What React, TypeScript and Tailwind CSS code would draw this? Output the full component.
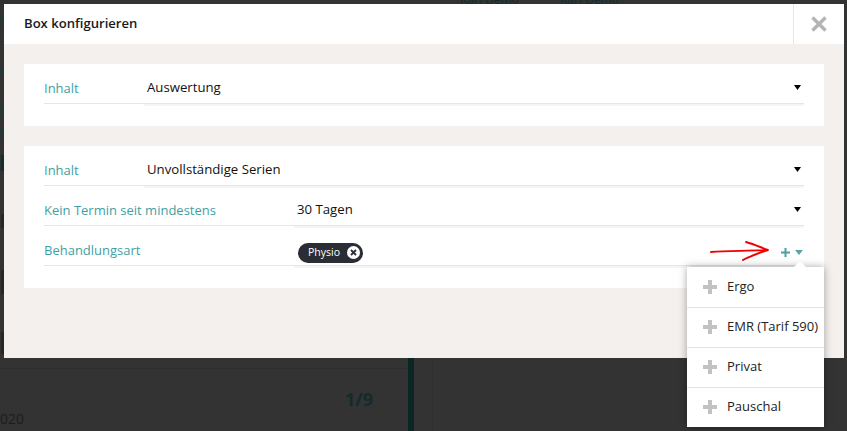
const font = { fontFamily: '"Open Sans", "Noto Sans", sans-serif' };

function Caret() {
  return (
    <svg width="7" height="5" viewBox="0 0 7 5" className="shrink-0">
      <path d="M0 0H7L3.5 5Z" fill="#000" />
    </svg>
  );
}

function Row({
  label,
  value,
  labelW,
  children,
}: {
  label: string;
  value?: string;
  labelW: string;
  children?: React.ReactNode;
}) {
  return (
    <div className="flex h-10 items-start">
      <div className={`${labelW} h-10 shrink-0 border-b border-[#e6e6e6] pt-[15px] text-[13px] leading-[18px] text-[#3f9fa3]`}>
        {label}
      </div>
      <div className="flex-1 border-b-2 border-[#f5f5f5]">
        <div className="flex h-10 items-center justify-between border-b border-[#e6e6e6] pt-2">
          {children ?? (
            <>
              <span className="pl-[3px] text-[13.2px] text-[#111]">{value}</span>
              <span className="flex pr-[3px]">
                <Caret />
              </span>
            </>
          )}
        </div>
      </div>
    </div>
  );
}

function MenuItem({ label }: { label: string }) {
  return (
    <div className="flex h-10 items-center border-b border-[#e3e3e3] pb-[2px] pl-4 text-[13px] text-[#222] last:h-[39px] last:border-b-0">
      <svg width="14" height="14" viewBox="0 0 14 14" className="mr-[10px] shrink-0">
        <path d="M5 0h4v5h5v4H9v5H5V9H0V5h5z" fill="#c2c2c2" />
      </svg>
      {label}
    </div>
  );
}

export default function App() {
  return (
    <div className="relative flex h-[431px] w-[847px] flex-col overflow-hidden bg-[#333333]" style={font}>
      {/* dimmed page behind the dialog */}
      <div className="flex h-1 shrink-0 items-end gap-[43px] overflow-hidden pl-[460px] text-[12px] leading-[14px] text-[#0f2e2f]">
        <span className="-mb-[3px] w-[57px] whitespace-nowrap">Kari Demo</span>
        <span className="-mb-[3px] w-[57px] whitespace-nowrap">Kari Demo</span>
      </div>
      <div className="flex h-[354px] w-1 shrink-0 flex-col pl-px">
        <div className="mt-3 h-[10px] bg-[#1c3c3c]" />
        <div className="mt-10 h-[10px] bg-[#1c3c3c]" />
        <div className="mt-[29px] h-[10px] bg-[#1c3c3c]" />
        <div className="mt-[13px] h-[10px] bg-[#1c3c3c]" />
        <div className="mt-[17px] h-4 bg-[#0f3030]" />
        <div className="mt-[43px] h-[14px] bg-[#272727]" />
        <div className="mt-[42px] h-6 bg-[#272727]" />
        <div className="mt-[38px] h-[22px] bg-[#272727]" />
      </div>
      <div className="flex flex-1">
        <div className="flex w-[408px] shrink-0 flex-col pt-[10px]">
          <div className="flex flex-1 justify-between overflow-hidden border-t border-[#2e2e2e] pr-[35px]">
            <span className="-ml-2 pt-[39px] text-[14px] text-[#1d1d1d]">2020</span>
            <span className="pt-[17px] text-[18px] font-bold text-[#142a2c]">1/9</span>
          </div>
        </div>
        <div className="w-[6px] bg-[#0a2625]" />
        <div className="w-[18px]" />
        <div className="flex-1 border-l border-[#303030]" />
      </div>

      {/* dialog */}
      <div className="absolute left-1 top-1 h-[354px] w-[840px] bg-[#f4f0ed]">
        <div className="flex h-10 bg-white">
          <div className="flex-1 pl-5 text-[13.1px] font-semibold leading-[39px] text-[#1a1a1a]">Box konfigurieren</div>
          <div className="flex w-[51px] items-center justify-center border-l border-[#e6e6e6] pr-px">
            <svg width="16" height="16" viewBox="0 0 16 16">
              <path d="M1.5 1.5L14.5 14.5M14.5 1.5L1.5 14.5" stroke="#b4b4b4" strokeWidth="3.4" />
            </svg>
          </div>
        </div>

        <div className="flex flex-col gap-5 px-5 pt-5">
          <div className="h-[62px] bg-white px-5">
            <Row label="Inhalt" value="Auswertung" labelW="w-[100px]" />
          </div>

          <div className="h-[142px] bg-white px-5">
            <Row label="Inhalt" value="Unvollständige Serien" labelW="w-[100px]" />
            <Row label="Kein Termin seit mindestens" value="30 Tagen" labelW="w-[250px]" />
            <Row label="Behandlungsart" labelW="w-[250px]">
              <div className="ml-1 mt-[6px] flex h-5 items-center rounded-[10px] bg-[#2a2d34] pl-[10px] pr-[3px] text-[10.5px] text-white">
                Physio
                <svg width="13" height="13" viewBox="0 0 13 13" className="ml-[7px]">
                  <circle cx="6.5" cy="6.5" r="6.5" fill="#fff" />
                  <path d="M4 4L9 9M9 4L4 9" stroke="#2a2d34" strokeWidth="1.8" />
                </svg>
              </div>
              <div className="mr-px mt-[6px] flex items-center gap-[5px]">
                <svg width="9" height="9" viewBox="0 0 9 9">
                  <path d="M3.5 0h2v3.5H9v2H5.5V9h-2V5.5H0v-2h3.5z" fill="#4f9f9f" />
                </svg>
                <svg width="8" height="5" viewBox="0 0 8 5">
                  <path d="M0 0H8L4 5Z" fill="#5aa5a5" />
                </svg>
              </div>
            </Row>
          </div>
        </div>
      </div>

      {/* hand-drawn annotation */}
      <svg width="70" height="30" viewBox="0 0 70 30" className="absolute left-[705px] top-[238px]">
        <path
          d="M6 14C20 13 35 13 63 12C55 9 48 6 41 4M63 12C54 15 45 18 38 22"
          fill="none"
          stroke="#f00000"
          strokeWidth="1.9"
          strokeLinecap="round"
        />
      </svg>

      {/* dropdown menu */}
      <div className="absolute left-[687px] top-[267px] w-[137px] bg-white pt-px shadow-[0_0_8px_rgba(0,0,0,0.35)]">
        <div className="absolute left-[107px] top-[-6px] h-0 w-0 border-x-[6px] border-b-[6px] border-x-transparent border-b-white" />
        <MenuItem label="Ergo" />
        <MenuItem label="EMR (Tarif 590)" />
        <MenuItem label="Privat" />
        <MenuItem label="Pauschal" />
      </div>
    </div>
  );
}
